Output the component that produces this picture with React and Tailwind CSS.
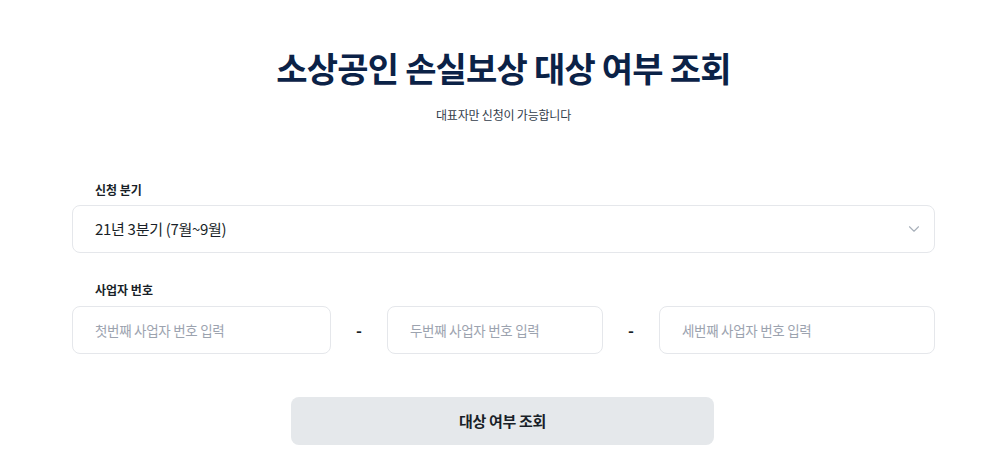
import React, { useState } from 'react';
import { ChevronDown } from 'lucide-react';

const font = { fontFamily: '"Noto Sans CJK KR", "Noto Sans", sans-serif' };

const BizInput = ({ placeholder, className }) => (
  <input
    type="text"
    placeholder={placeholder}
    className={`h-12 rounded-lg border border-[#e5e7eb] bg-white px-[22px] text-[13.5px] tracking-[-0.3px] text-[#1f2937] placeholder-[#9ca3af] outline-none ${className}`}
  />
);

const App = () => {
  const [quarter, setQuarter] = useState('21-3');

  return (
    <div className="min-h-[471px] bg-white pl-[72px] pr-[66px] pt-[44px] font-['Noto_Sans_CJK_KR',sans-serif]">
      <div className="text-center">
        <h1 className="text-[34px] font-bold leading-[48px] tracking-[-0.8px] text-[#0b2247]">
          소상공인 손실보상 대상 여부 조회
        </h1>
        <p className="mt-[15px] text-[12px] leading-4 tracking-[-0.2px] text-[#333d4b]">대표자만 신청이 가능합니다</p>
      </div>

      <div className="mt-[59px]">
        <label className="block pl-[23px] text-[12px] font-bold leading-4 text-[#191f28]">신청 분기</label>
        <div className="relative mt-[7px]">
          <select
            value={quarter}
            onChange={(e) => setQuarter(e.target.value)}
            className="h-12 w-full appearance-none rounded-lg border border-[#e5e7eb] bg-white pl-[22px] text-[15px] tracking-[-0.3px] text-[#191f28] outline-none"
            style={font}
          >
            <option value="21-3">21년 3분기 (7월~9월)</option>
          </select>
          <ChevronDown className="pointer-events-none absolute right-[12px] top-1/2 h-[18px] w-[18px] -translate-y-1/2 text-[#a8b0ba]" strokeWidth={1.5} />
        </div>
      </div>

      <div className="mt-[29px]">
        <label className="block pl-[23px] text-[12px] font-bold leading-4 text-[#191f28]">사업자 번호</label>
        <div className="mt-[8px] flex items-center">
          <BizInput placeholder="첫번째 사업자 번호 입력" className="w-[259px]" />
          <span className="w-[56px] text-center text-[16px] font-bold text-[#191f28]">-</span>
          <BizInput placeholder="두번째 사업자 번호 입력" className="w-[216px]" />
          <span className="w-[56px] text-center text-[16px] font-bold text-[#191f28]">-</span>
          <BizInput placeholder="세번째 사업자 번호 입력" className="flex-1" />
        </div>
      </div>

      <div className="mt-[43px] flex justify-center pr-[2px]">
        <button className="h-12 w-[423px] rounded-lg bg-[#e5e8eb] text-[15px] font-bold tracking-[-0.3px] text-[#191f28]">
          대상 여부 조회
        </button>
      </div>
    </div>
  );
};

export default App;
